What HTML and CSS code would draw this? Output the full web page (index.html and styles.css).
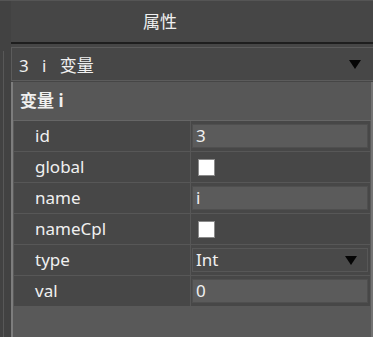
FILE: index.html
```html
<!DOCTYPE html>
<html lang="zh-CN">
<head>
  <meta charset="UTF-8">
  <meta name="viewport" content="width=device-width, initial-scale=1.0">
  <title>属性</title>
  <link rel="stylesheet" href="styles.css">
</head>
<body>
  <div class="dock">
    <div class="side"><div class="side-line"></div></div>
    <div class="main">
      <div class="title">属性</div>
      <div class="combo">
        <span class="combo-text">3&nbsp;&nbsp;&nbsp;i&nbsp;&nbsp;&nbsp;变量</span>
        <span class="arrow"></span>
      </div>
      <div class="panel">
        <div class="panel-head">变量 i</div>
        <div class="grid">
          <div class="row">
            <div class="key">id</div>
            <div class="val"><div class="box">3</div></div>
          </div>
          <div class="row">
            <div class="key">global</div>
            <div class="val"><span class="check"></span></div>
          </div>
          <div class="row">
            <div class="key">name</div>
            <div class="val"><div class="box">i</div></div>
          </div>
          <div class="row">
            <div class="key">nameCpl</div>
            <div class="val"><span class="check"></span></div>
          </div>
          <div class="row">
            <div class="key">type</div>
            <div class="val"><div class="box select">Int<span class="arrow"></span></div></div>
          </div>
          <div class="row last">
            <div class="key">val</div>
            <div class="val"><div class="box">0</div></div>
          </div>
        </div>
      </div>
    </div>
  </div>
</body>
</html>
```

FILE: styles.css
```css
/* 全局 */
body {
  margin: 0;
  width: 373px;
  height: 337px;
  overflow: hidden;
  background-color: #464646;
  color: #f0f0f0;
  font-family: "Noto Sans", "Noto Sans CJK SC", sans-serif;
}

.dock {
  display: flex;
  height: 336px;
  border-top: 1px solid #555555;
}

/* 左側窄條 */
.side {
  width: 11px;
  padding-top: 50px;
  background-color: #424242;
  box-sizing: border-box;
}

.side-line {
  margin-left: 3px;
  width: 1px;
  height: 100%;
  background-color: #585858;
}

.main {
  flex: 1;
  display: flex;
  flex-direction: column;
}

/* 標題 */
.title {
  height: 41px;
  line-height: 41px;
  padding-right: 64px;
  text-align: center;
  font-size: 17px;
  border-bottom: 2px solid #1e1e1e;
}

/* 下拉框 */
.combo {
  margin-top: 3px;
  height: 32px;
  display: flex;
  align-items: center;
  justify-content: space-between;
  padding: 0 12px 0 7px;
  background-color: #474747;
  border: 1px solid #5c5c5c;
  border-right: none;
  font-size: 17px;
}

.arrow {
  width: 0;
  height: 0;
  border-left: 6px solid transparent;
  border-right: 6px solid transparent;
  border-top: 9px solid #050505;
}

/* 面板 */
.panel {
  flex: 1;
  margin-top: 1px;
  background-color: #595959;
  border-left: 2px solid #7d7d7d;
  border-right: 2px solid #727272;
}

.panel-head {
  height: 38px;
  line-height: 38px;
  padding-left: 7px;
  font-size: 17px;
  font-weight: bold;
  background-color: #575757;
  border-bottom: 1px solid #666666;
}

.grid {
  margin: 0 1px;
}

.row {
  display: grid;
  grid-template-columns: 177px 1fr;
  height: 30px;
  border-bottom: 1px solid #575757;
  background-color: #474747;
}

.row.last {
  border-bottom: none;
}

.key {
  padding-left: 21px;
  line-height: 30px;
  font-size: 17px;
  border-right: 1px solid #575757;
}

.val {
  display: flex;
  align-items: center;
  padding: 0 2px 0 1px;
}

.box {
  flex: 1;
  height: 22px;
  line-height: 22px;
  padding-left: 3px;
  font-size: 17px;
  background-color: #5b5b5b;
  border: 1px solid #4f4f4f;
}

.box.select {
  display: flex;
  align-items: center;
  justify-content: space-between;
  padding-right: 10px;
  background-color: #494949;
  border-color: #575757;
}

.check {
  margin-left: 6px;
  width: 15px;
  height: 15px;
  background-color: #ffffff;
  border: 1px solid #8a8a8a;
}
```
